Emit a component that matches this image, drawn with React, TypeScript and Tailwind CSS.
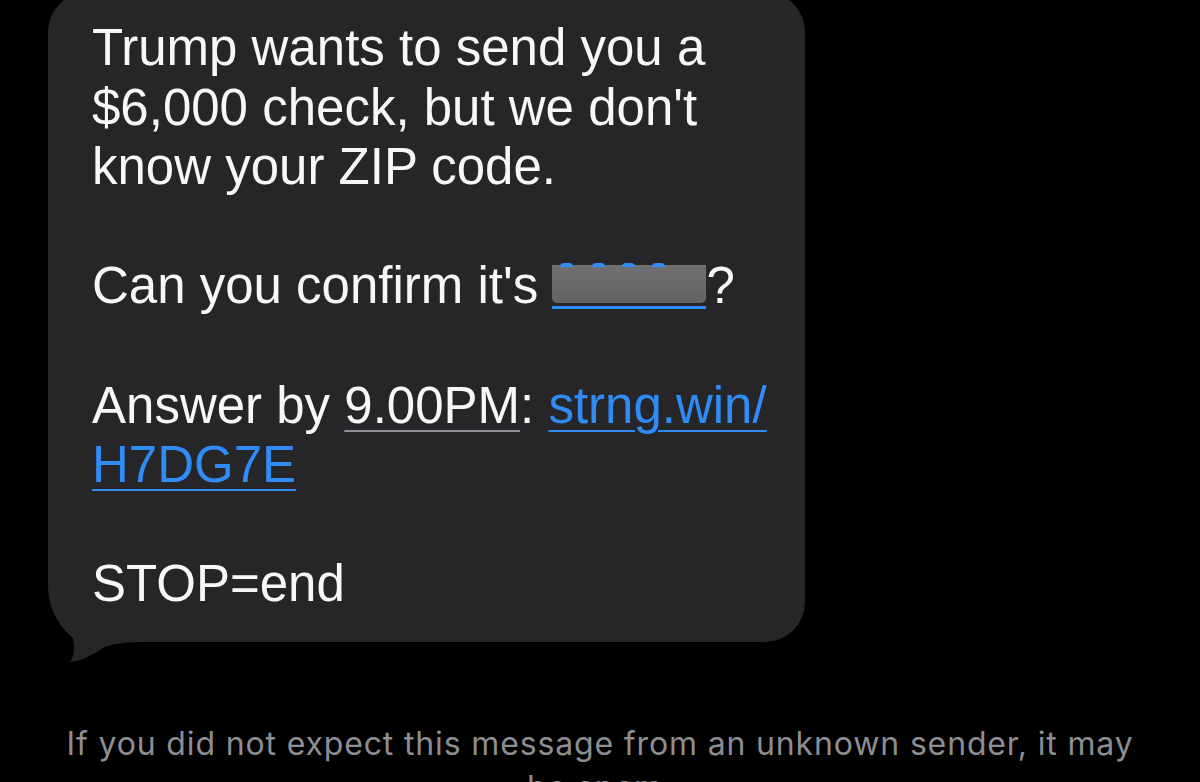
import React from 'react';

const LINE = 'h-[59.6px] leading-[59.6px] whitespace-nowrap';

const Blank = () => <div className={LINE} />;

// redacted zip code, drawn as a grey blur block with the blue link underline
const HiddenZip = () => (
  <span className="relative inline-block align-[-6px] border-b-[3px] border-[#2f8cf6] pb-[3px]">
    <span className="block h-[38px] w-[154px] rounded-b-[5px] bg-gradient-to-b from-[#707072] to-[#636365]" />
    <span className="absolute left-[8px] top-[-2px] h-[4px] w-[13px] rounded-t-full bg-[#2f8cf6]" />
    <span className="absolute left-[40px] top-[-2px] h-[4px] w-[13px] rounded-t-full bg-[#2f8cf6]" />
    <span className="absolute left-[70px] top-[-2px] h-[4px] w-[13px] rounded-t-full bg-[#2f8cf6]" />
    <span className="absolute left-[100px] top-[-2px] h-[4px] w-[13px] rounded-t-full bg-[#2f8cf6]" />
  </span>
);

const Tail = () => (
  <svg
    className="absolute left-0 bottom-[-22px]"
    width="96"
    height="104"
    viewBox="0 0 96 104"
  >
    <path
      d="M0 0 L0 25 C0 48 10 65 25 78 C27 88 26 96 22 102 C34 101 46 94 57 87 C68 83 80 82 96 82 L96 0 Z"
      fill="#262629"
    />
  </svg>
);

export default function App() {
  return (
    <div className="h-[782px] w-[1200px] overflow-hidden bg-black">
      {/* Message bubble */}
      <div className="relative mt-[-8px] ml-[48px] w-[757px]">
        <Tail />
        <div
          className="relative rounded-[40px] rounded-bl-[64px] bg-[#262629] pl-[44px] pt-[26px] pb-[28px] text-[51px] text-[#f7f7f7]"
          style={{ fontFamily: '"Liberation Sans", Arial, sans-serif' }}
        >
          <div className={LINE}>Trump wants to send you a</div>
          <div className={LINE}>$6,000 check, but we don't</div>
          <div className={LINE}>know your ZIP code.</div>
          <Blank />
          <div className={LINE}>
            Can you confirm it's <HiddenZip />?
          </div>
          <Blank />
          <div className={LINE}>
            Answer by{' '}
            <span className="underline decoration-[#8e8e93] decoration-2 underline-offset-[7px]">9.00PM</span>:{' '}
            <span className="text-[#2f8cf6] underline decoration-2 underline-offset-[7px]">strng.win/</span>
          </div>
          <div className={LINE}>
            <span className="text-[#2f8cf6] underline decoration-2 underline-offset-[7px]">H7DG7E</span>
          </div>
          <Blank />
          <div className={LINE}>STOP=end</div>
        </div>
      </div>

      {/* Unknown sender notice */}
      <p
        className="mt-[80px] text-center text-[32px] leading-[44px] tracking-[0.85px] whitespace-nowrap text-[#8d8d92]"
        style={{ fontFamily: 'Inter, Roboto, sans-serif' }}
      >
        If you did not expect this message from an unknown sender, it may
        <br />
        be spam.
      </p>
    </div>
  );
}
